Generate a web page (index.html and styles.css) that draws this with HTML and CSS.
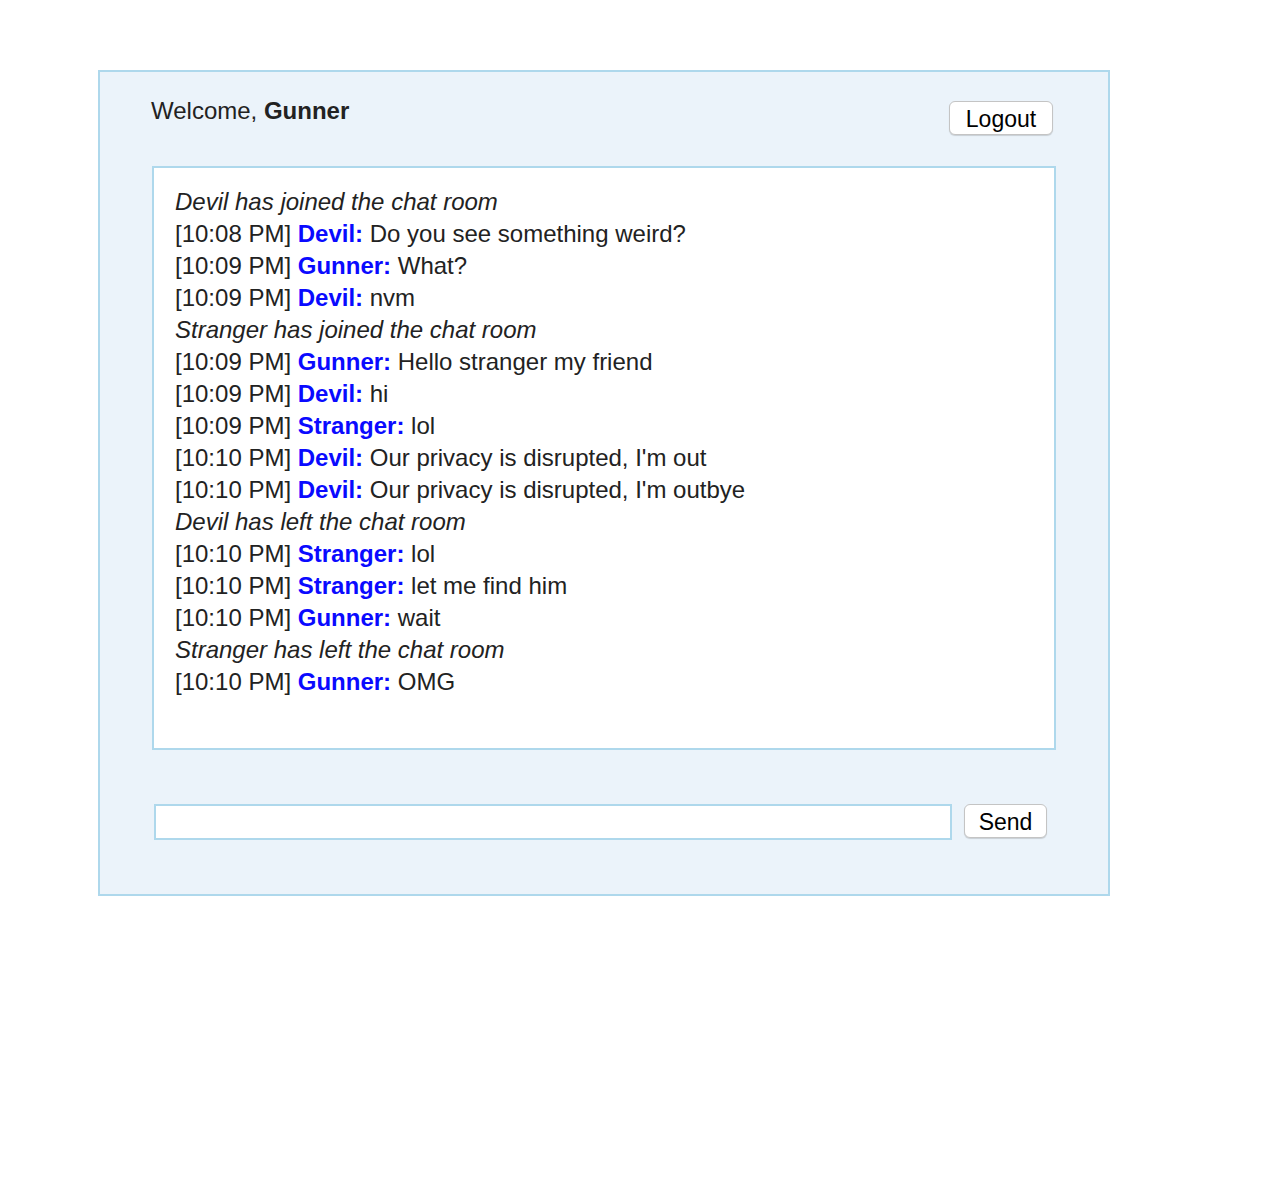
FILE: index.html
```html
<!DOCTYPE html>
<html>
<head>
<meta charset="utf-8">
<link rel="stylesheet" href="styles.css">
</head>
<body>
<div class="wrap">
  <div class="header">
    <div class="welcome">Welcome, <b>Gunner</b></div>
    <button class="btn logout">Logout</button>
  </div>
  <div class="chat">
    <div class="sys">Devil has joined the chat room</div>
    <div class="msg">[10:08 PM] <b class="u">Devil:</b> Do you see something weird?</div>
    <div class="msg">[10:09 PM] <b class="u">Gunner:</b> What?</div>
    <div class="msg">[10:09 PM] <b class="u">Devil:</b> nvm</div>
    <div class="sys">Stranger has joined the chat room</div>
    <div class="msg">[10:09 PM] <b class="u">Gunner:</b> Hello stranger my friend</div>
    <div class="msg">[10:09 PM] <b class="u">Devil:</b> hi</div>
    <div class="msg">[10:09 PM] <b class="u">Stranger:</b> lol</div>
    <div class="msg">[10:10 PM] <b class="u">Devil:</b> Our privacy is disrupted, I'm out</div>
    <div class="msg">[10:10 PM] <b class="u">Devil:</b> Our privacy is disrupted, I'm outbye</div>
    <div class="sys">Devil has left the chat room</div>
    <div class="msg">[10:10 PM] <b class="u">Stranger:</b> lol</div>
    <div class="msg">[10:10 PM] <b class="u">Stranger:</b> let me find him</div>
    <div class="msg">[10:10 PM] <b class="u">Gunner:</b> wait</div>
    <div class="sys">Stranger has left the chat room</div>
    <div class="msg">[10:10 PM] <b class="u">Gunner:</b> OMG</div>
  </div>
  <div class="compose">
    <input class="input" type="text">
    <button class="btn send">Send</button>
  </div>
</div>
</body>
</html>
```
FILE: styles.css
```css
html, body {
  margin: 0;
  padding: 0;
  background: #ffffff;
}
body {
  font-family: "Liberation Sans", Arial, sans-serif;
  color: #222222;
}
.wrap {
  margin: 70px 0 0 98px;
  width: 1008px;
  height: 822px;
  border: 2px solid #aed8ec;
  background: #ebf3fa;
  box-sizing: content-box;
}
.header {
  display: flex;
  justify-content: space-between;
  align-items: flex-start;
  padding: 0 55px 0 51px;
  height: 94px;
}
.welcome {
  font-size: 24px;
  line-height: 28px;
  margin-top: 25px;
}
.welcome b {
  font-weight: bold;
}
.btn {
  font-family: "Liberation Sans", Arial, sans-serif;
  font-size: 23px;
  color: #000;
  background: #ffffff;
  border: 1px solid #c4c4c4;
  border-radius: 6px;
  box-shadow: 0 1px 1px rgba(0,0,0,0.15);
  padding: 2px 0 0 0;
  line-height: 30px;
}
.logout {
  margin-top: 29px;
  width: 104px;
  height: 34px;
}
.chat {
  margin: 0 52px;
  background: #ffffff;
  border: 2px solid #aed8ec;
  box-sizing: content-box;
  padding: 18px 21px 0 21px;
  height: 562px;
  font-size: 24px;
  line-height: 32px;
}
.sys {
  font-style: italic;
}
.u {
  color: #0a0aff;
  font-weight: bold;
}
.compose {
  display: flex;
  align-items: flex-start;
  margin: 54px 0 0 54px;
}
.input {
  width: 798px;
  height: 36px;
  box-sizing: border-box;
  border: 2px solid #aed8ec;
  background: #ffffff;
  margin: 0;
  padding: 0 4px;
  font-size: 20px;
  outline: none;
}
.send {
  margin-left: 12px;
  width: 83px;
  height: 34px;
}
```
